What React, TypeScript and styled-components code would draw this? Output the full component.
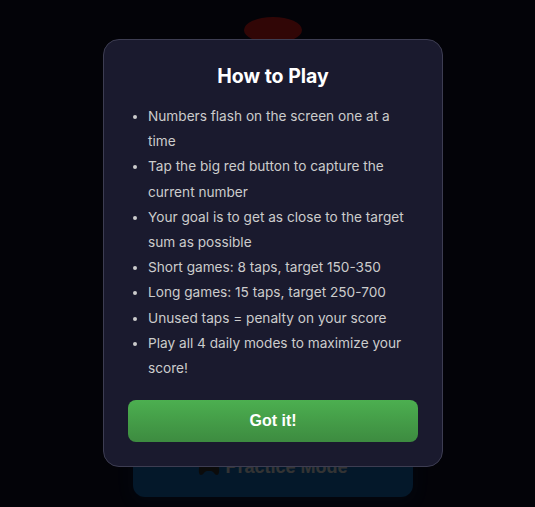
import styled, { createGlobalStyle } from "styled-components"

const rules = [
    "Numbers flash on the screen one at a time",
    "Tap the big red button to capture the current number",
    "Your goal is to get as close to the target sum as possible",
    "Short games: 8 taps, target 150-350",
    "Long games: 15 taps, target 250-700",
    "Unused taps = penalty on your score",
    "Play all 4 daily modes to maximize your score!",
]

const GlobalStyle = createGlobalStyle`
    html, body {
        margin: 0;
        padding: 0;
        height: 100%;
        overflow: hidden;
        background: #0f0f2a;
    }

    * {
        box-sizing: border-box;
    }
`

const GamePage = styled.div`
    width: 546px;
    height: 507px;
    padding-top: 17px;
    overflow: hidden;

    display: flex;
    flex-direction: column;
    align-items: center;

    font-family: "Liberation Sans", Arial, sans-serif;
`

const RedButton = styled.div`
    width: 58px;
    height: 26px;
    border-radius: 50%;
    background: #f52020;
`

const PracticeButton = styled.div`
    width: 280px;
    height: 60px;
    margin-top: 394px;
    border-radius: 12px;
    background: #1478d2;
    box-shadow: 0 4px 15px rgba(20, 120, 210, 0.2);
    color: #fff;

    display: flex;
    align-items: center;
    justify-content: center;
    gap: 5px;

    font-size: 18px;
    font-weight: bold;
`

const PadIcon = styled.svg`
    width: 22px;
    height: 16px;
    margin-top: 2px;
`

const Overlay = styled.div`
    position: fixed;
    top: 0;
    left: 0;
    width: 546px;
    height: 507px;
    background: rgba(0, 0, 0, 0.8);

    display: flex;
    align-items: center;
    justify-content: center;
`

const Modal = styled.div`
    width: 340px;
    height: 428px;
    margin-top: -1px;
    padding: 24px;

    background: #1a1a2e;
    border: 1px solid #3d3d52;
    border-radius: 16px;

    font-family: Inter, sans-serif;
`

const Title = styled.h2`
    margin: 0 0 16px;
    text-align: center;
    font-size: 19.5px;
    line-height: 24px;
    font-weight: 700;
    color: #fff;
`

const RuleList = styled.ul`
    margin: 0 0 19px;
    padding-left: 20px;
    font-size: 13.65px;
    line-height: 25.2px;
    color: #ccc;
`

const GotItButton = styled.button`
    display: block;
    width: 100%;
    height: 42px;
    padding: 0;
    border: none;
    border-radius: 8px;
    background: linear-gradient(180deg, #4caf50, #3d8b40);
    color: #fff;

    font-family: "Liberation Sans", Arial, sans-serif;
    font-size: 16px;
    font-weight: 700;
`

const App = () => {
    return (
        <>
            <GlobalStyle />

            <GamePage>
                <RedButton />
                <PracticeButton>
                    <PadIcon viewBox="0 0 22 16">
                        <path
                            d="M6 1h10c3 0 4.500 3 5 7 .5 3.500 0 7-2 7-2.500 0-3.500-4-6-4H9c-2.500 0-3.500 4-6 4-2 0-2.500-3.500-2-7 .5-4 2-7 5-7z"
                            fill="#3a3a3a"
                        />
                        <circle cx="6" cy="5.500" r="1.500" fill="#e02020" />
                        <circle cx="16" cy="5.500" r="1.500" fill="#e02020" />
                    </PadIcon>
                    Practice Mode
                </PracticeButton>
            </GamePage>

            <Overlay>
                <Modal>
                    <Title>How to Play</Title>

                    <RuleList>
                        {rules.map(rule => (
                            <li key={rule}>{rule}</li>
                        ))}
                    </RuleList>

                    <GotItButton>Got it!</GotItButton>
                </Modal>
            </Overlay>
        </>
    )
}

export default App
